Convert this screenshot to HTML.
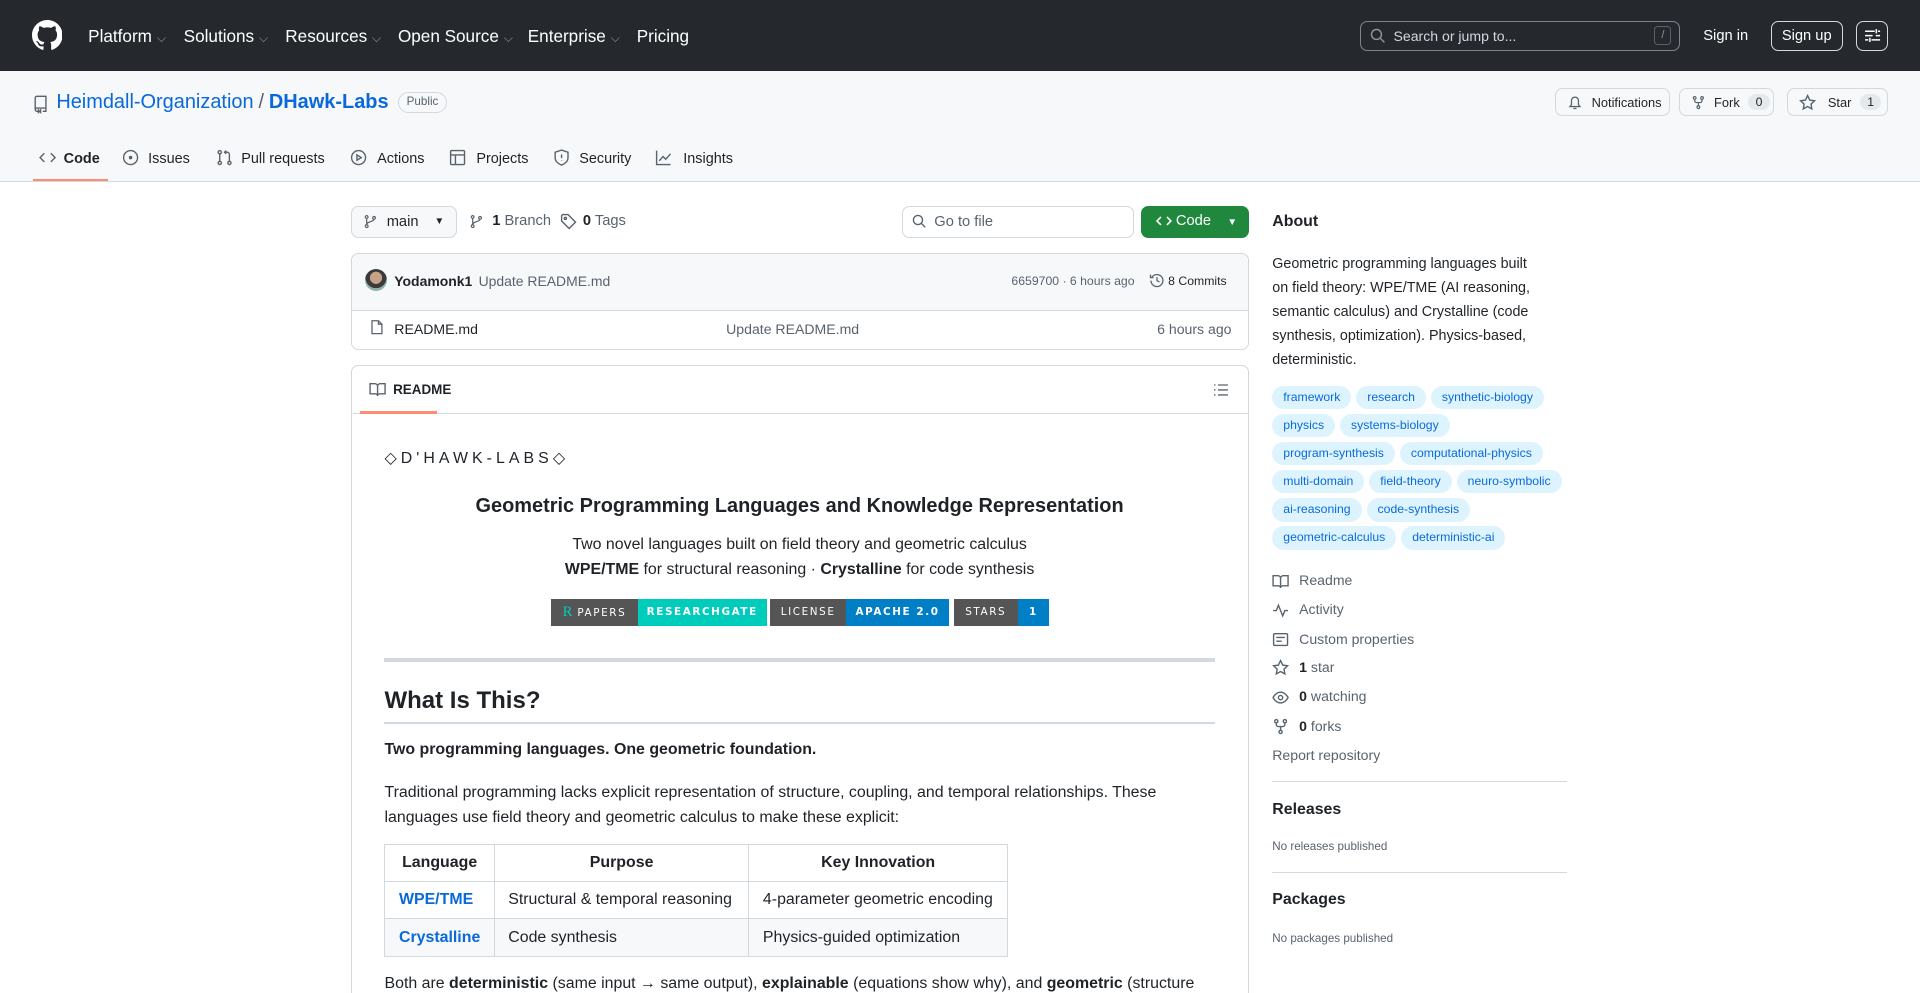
<!DOCTYPE html>
<html><head><meta charset="utf-8"><style>
html{zoom:1.2245;overflow:hidden;height:811px}
*{box-sizing:border-box;margin:0;padding:0}
body{width:1568px;height:811px;overflow:hidden;font-family:"Liberation Sans",sans-serif;font-size:13px;color:#1f2328;background:#fff;position:relative}
.a{position:absolute;white-space:nowrap}
svg{display:inline-block;vertical-align:middle;flex-shrink:0}
.hdr{position:absolute;left:0;top:0;width:1568px;height:58px;background:#25292e}
.nav{color:#fff;font-size:14px;top:21px}
.nav i{font-style:normal;color:#9198a1;font-size:10px;margin-left:4px}
.rh{position:absolute;left:0;top:58px;width:1568px;height:91px;background:#f6f8fa;border-bottom:1px solid #d1d9e0}
.btn{position:absolute;border:1px solid #d1d9e0;border-radius:6px;background:#f6f8fa;font-size:10.5px;display:flex;align-items:center;padding:0 9px;gap:7px}
.cnt{background:#e6e9ec;border-radius:10px;padding:1px 6px;font-size:10px}
.tab{top:123px;font-size:11.8px;color:#1f2328}
.ic{stroke:#59636e;fill:none;stroke-width:1.3}
.box{position:absolute;border:1px solid #d1d9e0;border-radius:6px}
.g{color:#59636e}
.tp{display:inline-block;background:#ddf4ff;color:#0969da;font-size:10px;border-radius:10px;padding:0 9px;height:19px;line-height:19px;margin:0 4px 4px 0}
.sl{left:1039px;font-size:11.5px;color:#59636e}
.sl svg{margin-right:8px}
.bd{position:absolute;top:489px;height:22px;font-size:8.5px;letter-spacing:1.3px;color:#fff;line-height:22px;text-align:center;font-family:"DejaVu Sans",sans-serif}
table{border-collapse:collapse;position:absolute;left:314px;top:689px;font-size:13px}
td,th{border:1px solid #d1d9e0;height:30.5px;padding:0 11px;white-space:nowrap}
th{font-weight:bold;text-align:center}
a{color:#0969da}
</style></head><body>
<div class="hdr"></div>
<svg class="a" style="left:26px;top:16px" width="25" height="25" viewBox="0 0 16 16"><path fill="#fff" d="M8 0C3.58 0 0 3.58 0 8c0 3.54 2.290 6.53 5.47 7.59.4.07.55-.17.55-.38 0-.19-.01-.82-.01-1.49-2.01.37-2.53-.49-2.69-.94-.09-.23-.48-.94-.82-1.130-.28-.15-.68-.52-.01-.53.63-.01 1.080.58 1.23.82.72 1.21 1.87.87 2.33.66.07-.52.28-.87.51-1.070-1.78-.2-3.64-.89-3.64-3.95 0-.87.31-1.59.82-2.150-.08-.2-.36-1.02.08-2.12 0 0 .67-.21 2.2.82.64-.18 1.32-.27 2-.27.68 0 1.36.09 2 .27 1.53-1.04 2.2-.82 2.2-.82.44 1.1.16 1.92.08 2.12.51.56.82 1.27.82 2.15 0 3.07-1.87 3.75-3.65 3.95.29.25.54.73.54 1.48 0 1.07-.01 1.93-.01 2.2 0 .21.15.46.55.38A8.013 8.013 0 0016 8c0-4.42-3.58-8-8-8z"/></svg>
<div class="a nav" style="left:72px">Platform<i>⌵</i></div>
<div class="a nav" style="left:150px">Solutions<i>⌵</i></div>
<div class="a nav" style="left:233px">Resources<i>⌵</i></div>
<div class="a nav" style="left:325px">Open Source<i>⌵</i></div>
<div class="a nav" style="left:431px">Enterprise<i>⌵</i></div>
<div class="a nav" style="left:520px">Pricing</div>
<div class="a" style="left:1111px;top:17px;width:261px;height:25px;border:1px solid #7d8590;border-radius:6px"></div>
<svg class="a" style="left:1119px;top:23px" width="13" height="13" viewBox="0 0 16 16"><circle cx="6.5" cy="6.5" r="5" stroke="#9198a1" fill="none" stroke-width="1.4"/><path d="M10.5 10.5l4 4" stroke="#9198a1" stroke-width="1.4"/></svg>
<div class="a" style="left:1138px;top:23px;color:#d1d7e0;font-size:11.5px">Search or jump to...</div>
<div class="a" style="left:1351px;top:21px;width:14px;height:16px;border:1px solid #59636e;border-radius:3px;color:#9198a1;font-size:9px;text-align:center;line-height:14px">/</div>
<div class="a" style="left:1391px;top:23px;color:#fff;font-size:12px">Sign in</div>
<div class="a" style="left:1446px;top:17px;width:59px;height:25px;border:1px solid #d1d9e0;border-radius:6px;color:#fff;font-size:12px;text-align:center;line-height:23px">Sign up</div>
<div class="a" style="left:1516px;top:17px;width:26px;height:25px;border:1px solid #d1d9e0;border-radius:6px"></div>
<svg class="a" style="left:1522px;top:22px" width="14" height="14" viewBox="0 0 16 16" stroke="#fff" stroke-width="1.4"><path d="M1 4h9M13 4h2M1 12h3M7 12h8M11.5 2v4M5.5 10v4M1 8h7M11 8h4"/></svg>

<div class="rh"></div>
<svg class="a ic" style="left:26px;top:77px" width="14" height="16" viewBox="0 0 16 16"><path d="M3 13V2.5A1.5 1.5 0 014.5 1H13v11H4.5A1.5 1.5 0 003 13.5 1.5 1.5 0 004.5 15H6M10 15h3v-3M6 13v3l1-1 1 1v-3"/></svg>
<div class="a" style="left:46px;top:74px;font-size:16.3px;color:#0969da;display:flex;align-items:center;gap:4px">Heimdall-Organization <span style="color:#59636e">/</span> <b>DHawk-Labs</b><span style="margin-left:4px;height:17px;border:1px solid #d1d9e0;border-radius:9px;font-size:9.5px;color:#59636e;padding:0 6px;line-height:15px">Public</span></div>
<div class="btn" style="left:1270px;top:72px;width:94px;height:23px"><svg class="ic" width="13" height="14" viewBox="0 0 16 16"><path d="M3 12h10l-1.5-2V6a3.5 3.5 0 00-7 0v4zM6.5 14h3"/></svg>Notifications</div>
<div class="btn" style="left:1371px;top:72px;width:78px;height:23px"><svg class="ic" width="12" height="14" viewBox="0 0 16 16"><circle cx="4" cy="3" r="1.5"/><circle cx="12" cy="3" r="1.5"/><circle cx="8" cy="13" r="1.5"/><path d="M4 4.5v1.5a2 2 0 002 2h4a2 2 0 002-2V4.5M8 8v3.5"/></svg>Fork <span class="cnt">0</span></div>
<div class="btn" style="left:1459px;top:72px;width:83px;height:23px"><svg class="ic" width="14" height="14" viewBox="0 0 16 16"><path d="M8 1.5l2 4.2 4.5.6-3.3 3.1.8 4.5L8 11.7l-4 2.2.8-4.5L1.5 6.3 6 5.7z"/></svg>&nbsp;Star <span class="cnt">1</span></div>

<svg class="a ic" style="left:32px;top:122px" width="14" height="14" viewBox="0 0 16 16"><path d="M5 4L1 8l4 4M11 4l4 4-4 4"/></svg>
<div class="a tab" style="left:52px;font-weight:bold">Code</div>
<div class="a" style="left:27px;top:146px;width:61px;height:2px;background:#fd8c73"></div>
<svg class="a ic" style="left:100px;top:122px" width="14" height="14" viewBox="0 0 16 16"><circle cx="8" cy="8" r="6.5"/><circle cx="8" cy="8" r="1" fill="#59636e"/></svg>
<div class="a tab" style="left:121px">Issues</div>
<svg class="a ic" style="left:176px;top:122px" width="14" height="14" viewBox="0 0 16 16"><circle cx="3.5" cy="3" r="1.5"/><circle cx="3.5" cy="13" r="1.5"/><circle cx="12.5" cy="13" r="1.5"/><path d="M3.5 4.5v7M12.5 11.5V5a2 2 0 00-2-2H8M9.5 1.5L8 3l1.5 1.5"/></svg>
<div class="a tab" style="left:197px">Pull requests</div>
<svg class="a ic" style="left:286px;top:122px" width="14" height="14" viewBox="0 0 16 16"><circle cx="8" cy="8" r="6.5"/><path d="M6.5 5.5v5l4-2.5z"/></svg>
<div class="a tab" style="left:308px">Actions</div>
<svg class="a ic" style="left:367px;top:122px" width="14" height="14" viewBox="0 0 16 16"><rect x="1.5" y="1.5" width="13" height="13" rx="1"/><path d="M1.5 5.5h13M6 5.5v9"/></svg>
<div class="a tab" style="left:389px">Projects</div>
<svg class="a ic" style="left:452px;top:122px" width="14" height="14" viewBox="0 0 16 16"><path d="M8 1l6 2v5c0 3.5-3 6-6 7-3-1-6-3.5-6-7V3z"/><path d="M8 5v3.5M8 10.5v.5"/></svg>
<div class="a tab" style="left:473px">Security</div>
<svg class="a ic" style="left:535px;top:122px" width="14" height="14" viewBox="0 0 16 16"><path d="M1.5 1.5v13h13M4 11l3.5-4 2.5 2.5 4.5-5"/></svg>
<div class="a tab" style="left:558px">Insights</div>

<div class="btn" style="left:287px;top:168px;width:86px;height:26px;font-size:12px"><svg class="ic" width="12" height="14" viewBox="0 0 16 16"><circle cx="4" cy="3" r="1.5"/><circle cx="12" cy="4" r="1.5"/><circle cx="4" cy="13" r="1.5"/><path d="M4 4.5v7M12 5.5c0 3-8 2-8 6"/></svg>main <span style="font-size:8px;margin-left:6px">▼</span></div>
<svg class="a ic" style="left:383px;top:174px" width="12" height="14" viewBox="0 0 16 16"><circle cx="4" cy="3" r="1.5"/><circle cx="12" cy="4" r="1.5"/><circle cx="4" cy="13" r="1.5"/><path d="M4 4.5v7M12 5.5c0 3-8 2-8 6"/></svg>
<div class="a" style="left:402px;top:174px;font-size:12px;color:#59636e"><b style="color:#1f2328">1</b> Branch</div>
<svg class="a ic" style="left:457px;top:174px" width="14" height="14" viewBox="0 0 16 16"><path d="M1.5 2.5v5l7 7 6-6-7-7h-5z"/><circle cx="5" cy="5" r="1"/></svg>
<div class="a" style="left:476px;top:174px;font-size:12px;color:#59636e"><b style="color:#1f2328">0</b> Tags</div>
<div class="a" style="left:737px;top:168px;width:189px;height:26px;border:1px solid #d1d9e0;border-radius:6px"></div>
<svg class="a" style="left:745px;top:175px" width="12" height="12" viewBox="0 0 16 16"><circle cx="6.5" cy="6.5" r="5" stroke="#59636e" fill="none" stroke-width="1.5"/><path d="M10.5 10.5l4 4" stroke="#59636e" stroke-width="1.5"/></svg>
<div class="a" style="left:763px;top:175px;font-size:12px;color:#59636e">Go to file</div>
<div class="a" style="left:932px;top:168px;width:88px;height:26px;background:#1f883d;border-radius:6px;color:#fff;font-size:12px;line-height:26px;padding-left:12px"><svg width="13" height="13" viewBox="0 0 16 16" stroke="#fff" fill="none" stroke-width="1.6"><path d="M5 4L1 8l4 4M11 4l4 4-4 4"/></svg> Code <span style="font-size:8px;margin-left:10px">▼</span></div>

<div class="box" style="left:287px;top:207px;width:733px;height:79px;overflow:hidden">
<div style="height:46px;background:#f6f8fa;border-bottom:1px solid #d1d9e0"></div></div>
<div class="a" style="left:298px;top:220px;width:18px;height:18px;border-radius:50%;background:radial-gradient(circle at 50% 40%,#c8a287 0 35%,#3a3a3a 36% 60%,#8fb3a8 61%)"></div>
<div class="a" style="left:322px;top:223px;font-size:11.4px"><b>Yodamonk1</b> <span class="g" style="margin-left:2px">Update README.md</span></div>
<div class="a g" style="left:826px;top:224px;font-size:10px">6659700 · 6 hours ago</div>
<svg class="a ic" style="left:938px;top:222px" width="13" height="14" viewBox="0 0 16 16"><path d="M2 8a6 6 0 106-6 6 6 0 00-5 2.5M1.5 2v3h3M8 4.5V8l2.5 1.5"/></svg>
<div class="a" style="left:954px;top:224px;font-size:10px">8 Commits</div>
<svg class="a ic" style="left:301px;top:260px" width="13" height="15" viewBox="0 0 16 16"><path d="M3 1.5h6.5l3.5 3.5v9.5H3zM9.5 1.5V5h3.5"/></svg>
<div class="a" style="left:322px;top:262px;font-size:11.5px">README.md</div>
<div class="a g" style="left:593px;top:262px;font-size:11.5px">Update README.md</div>
<div class="a g" style="left:945px;top:262px;font-size:11.5px">6 hours ago</div>

<div class="box" style="left:287px;top:298px;width:733px;height:530px"></div>
<div class="a" style="left:288px;top:337px;width:731px;height:1px;background:#d1d9e0"></div>
<div class="a" style="left:294px;top:336px;width:63px;height:2px;background:#fd8c73"></div>
<svg class="a ic" style="left:301px;top:311px" width="14" height="14" viewBox="0 0 16 16"><path d="M1 2.5h4.5A2.5 2.5 0 018 5v9a2 2 0 00-2-2H1zM15 2.5h-4.5A2.5 2.5 0 008 5v9a2 2 0 012-2h5z"/></svg>
<div class="a" style="left:321px;top:312px;font-size:11px;font-weight:bold">README</div>
<svg class="a ic" style="left:991px;top:312px" width="13" height="13" viewBox="0 0 16 16"><path d="M5 3h10M5 8h10M5 13h10M1 3h1.5M1 8h1.5M1 13h1.5"/></svg>

<div class="a" style="left:314px;top:366px;font-size:13px;letter-spacing:3.3px">◇D'HAWK-LABS◇</div>
<div class="a" style="left:314px;width:678px;text-align:center;top:404px;font-size:16.3px;font-weight:bold">Geometric Programming Languages and Knowledge Representation</div>
<div class="a" style="left:314px;width:678px;text-align:center;top:438px;font-size:13px">Two novel languages built on field theory and geometric calculus</div>
<div class="a" style="left:314px;width:678px;text-align:center;top:458px;font-size:13px"><b>WPE/TME</b> for structural reasoning · <b>Crystalline</b> for code synthesis</div>
<div class="bd" style="left:450px;width:71px;background:#555"><span style="font-family:'Liberation Serif',serif;font-size:12px;color:#00ccbb;letter-spacing:0">R</span> PAPERS</div>
<div class="bd" style="left:521px;width:105px;background:#00ccbb;font-weight:bold">RESEARCHGATE</div>
<div class="bd" style="left:629px;width:62px;background:#555">LICENSE</div>
<div class="bd" style="left:691px;width:84px;background:#007ec6;font-weight:bold">APACHE 2.0</div>
<div class="bd" style="left:779px;width:52px;background:#555">STARS</div>
<div class="bd" style="left:831px;width:26px;background:#007ec6;font-weight:bold">1</div>
<div class="a" style="left:314px;top:537px;width:678px;height:4px;background:#d1d9e0"></div>
<div class="a" style="left:314px;top:561px;font-size:19.6px;font-weight:bold">What Is This?</div>
<div class="a" style="left:314px;top:590px;width:678px;height:1px;background:#d1d9e0"></div>
<div class="a" style="left:314px;top:605px;font-weight:bold">Two programming languages. One geometric foundation.</div>
<div class="a" style="left:314px;top:638px;line-height:20px">Traditional programming lacks explicit representation of structure, coupling, and temporal relationships. These<br>languages use field theory and geometric calculus to make these explicit:</div>
<table><tr><th style="width:87px">Language</th><th style="width:208px">Purpose</th><th style="width:211px">Key Innovation</th></tr>
<tr><td><a style="font-weight:bold">WPE/TME</a></td><td>Structural &amp; temporal reasoning</td><td>4-parameter geometric encoding</td></tr>
<tr style="background:#f6f8fa"><td><a style="font-weight:bold">Crystalline</a></td><td>Code synthesis</td><td>Physics-guided optimization</td></tr></table>
<div class="a" style="left:314px;top:796px">Both are <b>deterministic</b> (same input → same output), <b>explainable</b> (equations show why), and <b>geometric</b> (structure</div>

<div class="a" style="left:1039px;top:174px;font-size:13px;font-weight:bold">About</div>
<div class="a" style="left:1039px;top:206px;font-size:11.7px;line-height:19.6px">Geometric programming languages built<br>on field theory: WPE/TME (AI reasoning,<br>semantic calculus) and Crystalline (code<br>synthesis, optimization). Physics-based,<br>deterministic.</div>
<div class="a" style="left:1039px;top:315px;line-height:0;font-size:0">
<div><span class="tp">framework</span><span class="tp">research</span><span class="tp">synthetic-biology</span></div>
<div><span class="tp">physics</span><span class="tp">systems-biology</span></div>
<div><span class="tp">program-synthesis</span><span class="tp">computational-physics</span></div>
<div><span class="tp">multi-domain</span><span class="tp">field-theory</span><span class="tp">neuro-symbolic</span></div>
<div><span class="tp">ai-reasoning</span><span class="tp">code-synthesis</span></div>
<div><span class="tp">geometric-calculus</span><span class="tp">deterministic-ai</span></div></div>
<div class="a sl" style="top:467px"><svg class="ic" width="14" height="14" viewBox="0 0 16 16"><path d="M1 2.5h4.5A2.5 2.5 0 018 5v9a2 2 0 00-2-2H1zM15 2.5h-4.5A2.5 2.5 0 008 5v9a2 2 0 012-2h5z"/></svg>Readme</div>
<div class="a sl" style="top:491px"><svg class="ic" width="14" height="14" viewBox="0 0 16 16"><path d="M1 8h3l2-5 4 10 2-5h3"/></svg>Activity</div>
<div class="a sl" style="top:515px"><svg class="ic" width="14" height="14" viewBox="0 0 16 16"><rect x="1.5" y="2.5" width="13" height="11" rx="1"/><path d="M4 6h8M4 9.5h5"/></svg>Custom properties</div>
<div class="a sl" style="top:538px"><svg class="ic" width="14" height="14" viewBox="0 0 16 16"><path d="M8 1.5l2 4.2 4.5.6-3.3 3.1.8 4.5L8 11.7l-4 2.2.8-4.5L1.5 6.3 6 5.7z"/></svg><b style="color:#1f2328">1</b>&nbsp;star</div>
<div class="a sl" style="top:562px"><svg class="ic" width="14" height="14" viewBox="0 0 16 16"><path d="M1 8s2.5-5 7-5 7 5 7 5-2.5 5-7 5-7-5-7-5z"/><circle cx="8" cy="8" r="2"/></svg><b style="color:#1f2328">0</b>&nbsp;watching</div>
<div class="a sl" style="top:586px"><svg class="ic" width="14" height="14" viewBox="0 0 16 16"><circle cx="4" cy="3" r="1.5"/><circle cx="12" cy="3" r="1.5"/><circle cx="8" cy="13" r="1.5"/><path d="M4 4.5v1.5a2 2 0 002 2h4a2 2 0 002-2V4.5M8 8v3.5"/></svg><b style="color:#1f2328">0</b>&nbsp;forks</div>
<div class="a sl" style="top:610px">Report repository</div>
<div class="a" style="left:1039px;top:638px;width:241px;height:1px;background:#d1d9e0"></div>
<div class="a" style="left:1039px;top:654px;font-size:13px;font-weight:bold">Releases</div>
<div class="a g" style="left:1039px;top:686px;font-size:9.5px">No releases published</div>
<div class="a" style="left:1039px;top:712px;width:241px;height:1px;background:#d1d9e0"></div>
<div class="a" style="left:1039px;top:728px;font-size:13px;font-weight:bold">Packages</div>
<div class="a g" style="left:1039px;top:761px;font-size:9.5px">No packages published</div>
</body></html>
